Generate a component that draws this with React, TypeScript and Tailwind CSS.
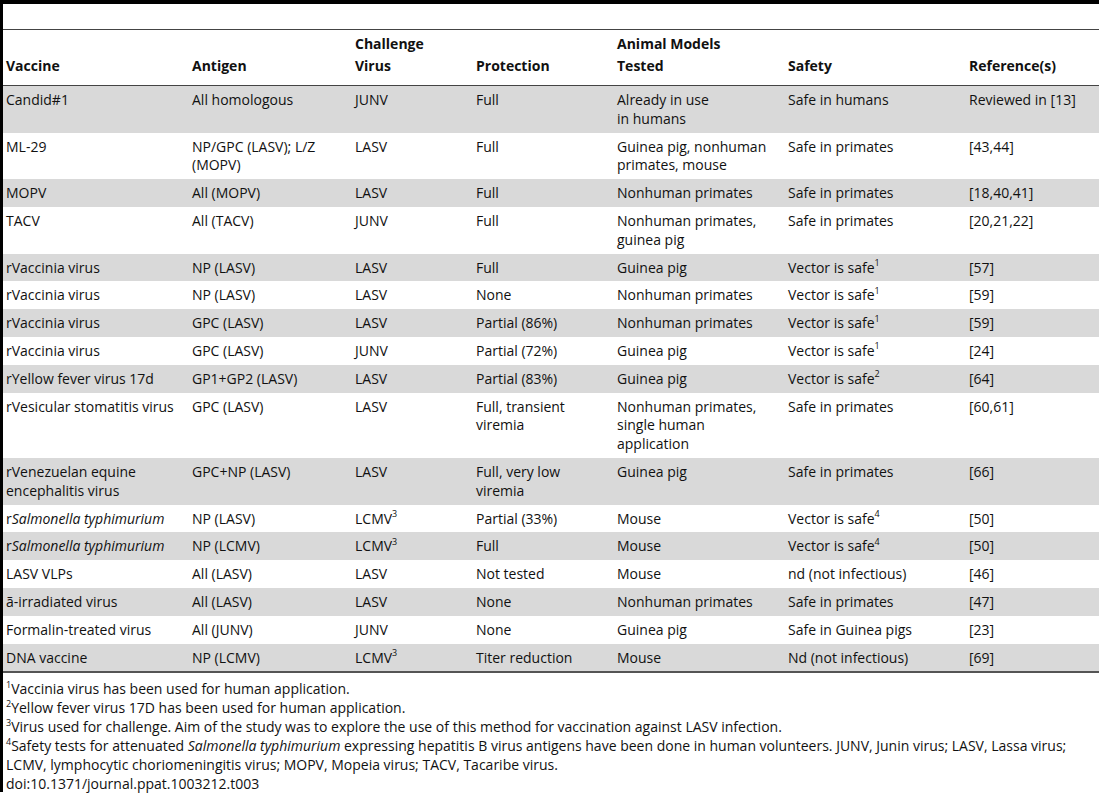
import React from 'react';

type Cell = React.ReactNode;

const sup = (n: string) => <sup className="text-[9px] relative -top-[1px] align-super leading-none">{n}</sup>;

const rows: Cell[][] = [
  ['Candid#1', 'All homologous', 'JUNV', 'Full', <>Already in use<br />in humans</>, 'Safe in humans', 'Reviewed in [13]'],
  ['ML-29', <>NP/GPC (LASV); L/Z<br />(MOPV)</>, 'LASV', 'Full', <>Guinea pig, nonhuman<br />primates, mouse</>, 'Safe in primates', '[43,44]'],
  ['MOPV', 'All (MOPV)', 'LASV', 'Full', 'Nonhuman primates', 'Safe in primates', '[18,40,41]'],
  ['TACV', 'All (TACV)', 'JUNV', 'Full', <>Nonhuman primates,<br />guinea pig</>, 'Safe in primates', '[20,21,22]'],
  ['rVaccinia virus', 'NP (LASV)', 'LASV', 'Full', 'Guinea pig', <>Vector is safe{sup('1')}</>, '[57]'],
  ['rVaccinia virus', 'NP (LASV)', 'LASV', 'None', 'Nonhuman primates', <>Vector is safe{sup('1')}</>, '[59]'],
  ['rVaccinia virus', 'GPC (LASV)', 'LASV', 'Partial (86%)', 'Nonhuman primates', <>Vector is safe{sup('1')}</>, '[59]'],
  ['rVaccinia virus', 'GPC (LASV)', 'JUNV', 'Partial (72%)', 'Guinea pig', <>Vector is safe{sup('1')}</>, '[24]'],
  ['rYellow fever virus 17d', 'GP1+GP2 (LASV)', 'LASV', 'Partial (83%)', 'Guinea pig', <>Vector is safe{sup('2')}</>, '[64]'],
  ['rVesicular stomatitis virus', 'GPC (LASV)', 'LASV', <>Full, transient<br />viremia</>, <>Nonhuman primates,<br />single human<br />application</>, 'Safe in primates', '[60,61]'],
  [<>rVenezuelan equine<br />encephalitis virus</>, 'GPC+NP (LASV)', 'LASV', <>Full, very low<br />viremia</>, 'Guinea pig', 'Safe in primates', '[66]'],
  [<>r<i>Salmonella typhimurium</i></>, 'NP (LASV)', <>LCMV{sup('3')}</>, 'Partial (33%)', 'Mouse', <>Vector is safe{sup('4')}</>, '[50]'],
  [<>r<i>Salmonella typhimurium</i></>, 'NP (LCMV)', <>LCMV{sup('3')}</>, 'Full', 'Mouse', <>Vector is safe{sup('4')}</>, '[50]'],
  ['LASV VLPs', 'All (LASV)', 'LASV', 'Not tested', 'Mouse', 'nd (not infectious)', '[46]'],
  ['ã-irradiated virus', 'All (LASV)', 'LASV', 'None', 'Nonhuman primates', 'Safe in primates', '[47]'],
  ['Formalin-treated virus', 'All (JUNV)', 'JUNV', 'None', 'Guinea pig', 'Safe in Guinea pigs', '[23]'],
  ['DNA vaccine', 'NP (LCMV)', <>LCMV{sup('3')}</>, 'Titer reduction', 'Mouse', 'Nd (not infectious)', '[69]'],
];

const widths = ['w-[186px]', 'w-[163px]', 'w-[121px]', 'w-[141px]', 'w-[171px]', 'w-[181px]', 'w-[133px]'];

export default function App() {
  return (
    <div className="w-[1099px] h-[800px] bg-white text-[#111] text-[14px] leading-[19px] font-['Open_Sans',sans-serif] overflow-hidden">
      <div className="border-l-[3px] border-black h-[792px]">
        <div className="h-[4px] bg-black" />
        <div className="h-[26px] border-b border-[#444]" />
        <table className="w-[1096px] table-fixed border-collapse">
          <colgroup>
            {widths.map((w, i) => (
              <col key={i} className={w} />
            ))}
          </colgroup>
          <thead>
            <tr className="border-b border-[#444] font-bold leading-[22px]">
              <th className="text-left align-bottom pl-[3px] pt-[3px] pb-[8px]">Vaccine</th>
              <th className="text-left align-bottom pl-[3px] pt-[3px] pb-[8px]">Antigen</th>
              <th className="text-left align-bottom pl-[3px] pt-[3px] pb-[8px]">Challenge<br />Virus</th>
              <th className="text-left align-bottom pl-[3px] pt-[3px] pb-[8px]">Protection</th>
              <th className="text-left align-bottom pl-[3px] pt-[3px] pb-[8px]">Animal Models<br />Tested</th>
              <th className="text-left align-bottom pl-[3px] pt-[3px] pb-[8px]">Safety</th>
              <th className="text-left align-bottom pl-[3px] pt-[3px] pb-[8px]">Reference(s)</th>
            </tr>
          </thead>
          <tbody className="border-b-2 border-[#555] leading-[18.8px]">
            {rows.map((r, i) => (
              <tr key={i} className={i % 2 === 0 ? 'bg-[#d9d9d9]' : 'bg-white'}>
                {r.map((c, j) => (
                  <td key={j} className="align-top whitespace-nowrap pl-[3px] pt-[5px] pb-[4px]">
                    {c}
                  </td>
                ))}
              </tr>
            ))}
          </tbody>
        </table>
        <div className="pl-[3px] pt-[6px]">
          <p>{sup('1')}Vaccinia virus has been used for human application.</p>
          <p>{sup('2')}Yellow fever virus 17D has been used for human application.</p>
          <p>{sup('3')}Virus used for challenge. Aim of the study was to explore the use of this method for vaccination against LASV infection.</p>
          <p>
            {sup('4')}Safety tests for attenuated <i>Salmonella typhimurium</i> expressing hepatitis B virus antigens have been done in human volunteers. JUNV, Junin virus; LASV, Lassa virus;
            <br />
            LCMV, lymphocytic choriomeningitis virus; MOPV, Mopeia virus; TACV, Tacaribe virus.
          </p>
          <p>doi:10.1371/journal.ppat.1003212.t003</p>
        </div>
      </div>
    </div>
  );
}
